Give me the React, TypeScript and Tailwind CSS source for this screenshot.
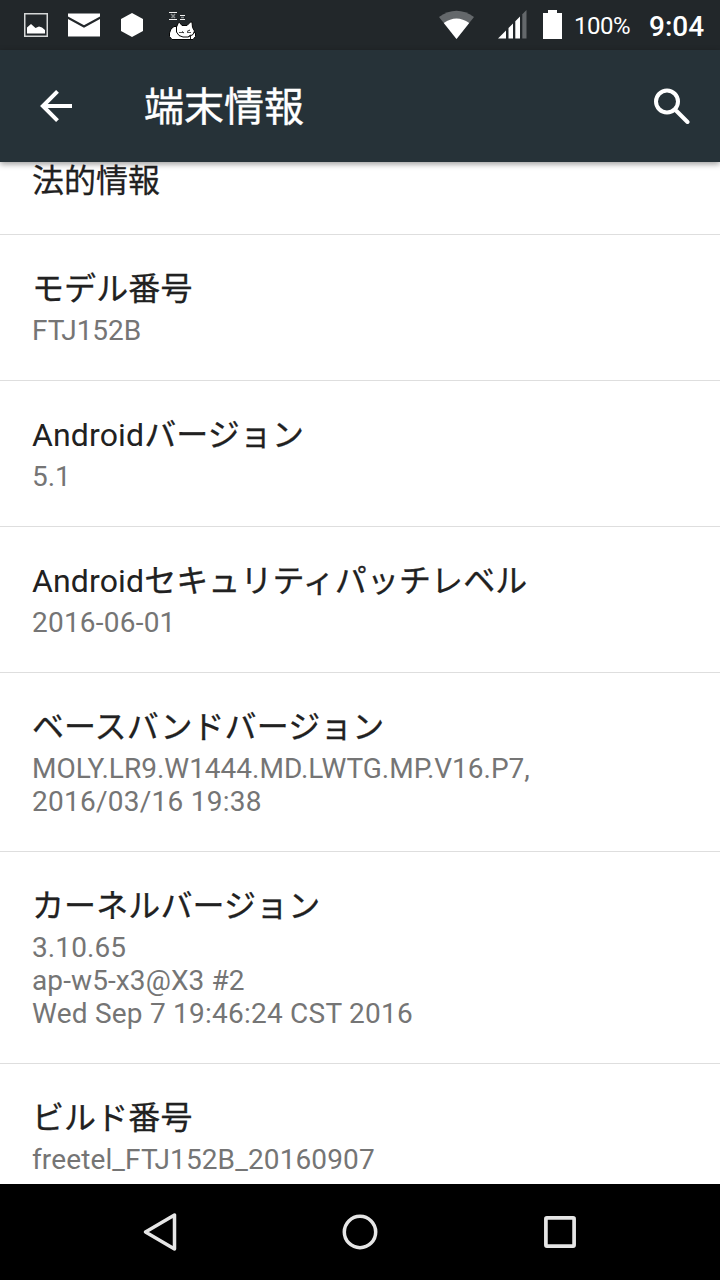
import type { ReactNode } from "react";

type Item = {
  prefix?: string;
  title: string;
  summary: string[];
  summaryClass?: string;
};

const items: Item[] = [
  { title: "モデル番号", summary: ["FTJ152B"] },
  { prefix: "Android", title: "バージョン", summary: ["5.1"] },
  {
    prefix: "Android",
    title: "セキュリティパッチレベル",
    summary: ["2016-06-01"],
    summaryClass: "tracking-[0.22px]",
  },
  {
    title: "ベースバンドバージョン",
    summary: ["MOLY.LR9.W1444.MD.LWTG.MP.V16.P7,", "2016/03/16 19:38"],
    summaryClass: "last:tracking-[0.25px]",
  },
  {
    title: "カーネルバージョン",
    summary: ["3.10.65", "ap-w5-x3@X3 #2", "Wed Sep 7 19:46:24 CST 2016"],
    summaryClass: "tracking-[0.1px] last:tracking-[0.23px]",
  },
  {
    title: "ビルド番号",
    summary: ["freetel_FTJ152B_20160907"],
    summaryClass: "tracking-[0.12px]",
  },
];

function CatIcon() {
  return (
    <svg className="ml-[25px] h-8 w-8" viewBox="0 0 32 32" fill="none">
      {/* Zz */}
      <path d="M1 3.500h8M1 10.500h8M12 6.500h5M12 10.500h5" stroke="#f0f0f0" />
      <path d="M3 5l4 4M7 5L3.500 9M13 8.500h3" stroke="#85898b" strokeWidth="1.500" />
      {/* sleeping cat: body, then head with ears */}
      <path
        d="M10 17.500H6L3 20l-1.500 4v3.500L4 30.500h21l2.500-3V24z"
        fill="#fff"
        stroke="#050505"
      />
      <path
        d="M10.500 13.500L8.500 18v5l2.500 3.500 4 1.500h5l5-2.500 1.500-3.500-2-3.500-.5-5.500h-1.500L19 16.500h-5l-2.500-3z"
        fill="#fff"
        stroke="#050505"
      />
      <path d="M11 23.500h4M19 23.500h4" stroke="#555" strokeWidth="1.200" />
      <path d="M14 22.500l2 1.500M19 22.500l3-1.500M20 28l2.500-2v4" stroke="#222" />
    </svg>
  );
}

function StatusBar() {
  return (
    <div className="flex h-[50px] shrink-0 items-center bg-[#22272a] text-white">
      <svg className="ml-6 h-6 w-6" viewBox="0 0 24 24" fill="none">
        <rect x=".75" y=".75" width="22.500" height="22.500" stroke="#d5d7d7" strokeWidth="1.500" />
        <path d="M3 20.500v-6l4-3.500 4.500 4 3.500-1.500 3 1 3 2.500v3.500z" fill="#fff" />
      </svg>
      <svg className="ml-5 h-6 w-8" viewBox="0 0 32 24" fill="none">
        <path d="M0 .5h32v23H0z" fill="#fff" />
        <path d="M-1 4.300l17 9.200L33 4.300" stroke="#22272a" strokeWidth="2.200" />
      </svg>
      <svg className="ml-[21px] h-6 w-[22px]" viewBox="0 0 22 24">
        <path d="M11 0l11 6v12l-11 6-11-6V6z" fill="#fff" />
      </svg>
      <CatIcon />

      <div className="ml-auto flex items-center">
        <svg className="h-[30px] w-[35px]" viewBox="0 0 35 30">
          <path d="M0 7Q17.500-5.500 35 7L17.500 29z" fill="#64686b" />
          <path d="M4.800 13Q17.500 4 30.200 13L17.500 29z" fill="#fff" />
        </svg>
        <svg className="ml-6 h-[30px] w-[29px]" viewBox="0 0 29 30">
          <path d="M0 28.500L8 20.500v8zM10.500 18l4.500-4.500v15h-4.500zM17.300 11.200l4.700-4.700v22h-4.700z" fill="#fff" />
          <path d="M24.300 4.200L28.500 0v28.500h-4.200z" fill="#64686b" />
        </svg>
        <svg className="ml-4 h-[30px] w-[19px]" viewBox="0 0 19 30">
          <path d="M5 0h9v3h5v26H0V3h5z" fill="#fff" />
        </svg>
        <span className="ml-3 w-[75px] pt-0.5 text-[24px] leading-[28px] tracking-[-0.5px]">100%</span>
        <span className="w-[71px] pt-[3px] text-[28px] leading-[32px] font-medium">9:04</span>
      </div>
    </div>
  );
}

function AppBar() {
  return (
    <header className="z-10 flex h-28 shrink-0 items-center bg-[#263238] text-white shadow-[0_2px_6px_rgba(0,0,0,0.4)]">
      <svg className="ml-10 h-8 w-8" viewBox="0 0 32 32" fill="none" stroke="#fff" strokeWidth="4">
        <path d="M32 16H3.500M17.500 1.400L2.900 16l14.600 14.600" />
      </svg>
      <h1 className="ml-[72px] pt-1 text-[40px] leading-[48px] [-webkit-text-stroke:0.4px_#fff]">
        端末情報
      </h1>
      <svg className="mr-[30px] ml-auto h-9 w-9" viewBox="0 0 36 36" fill="none" stroke="#fff">
        <circle cx="13" cy="13.500" r="11" strokeWidth="4" />
        <path d="M22.500 23l11 11" strokeWidth="4" strokeLinecap="round" />
      </svg>
    </header>
  );
}

function Row({ prefix, title, children }: { prefix?: string; title: string; children?: ReactNode }) {
  return (
    <li className="shrink-0 border-b border-[#dedede] px-8 pt-8 pb-[33px]">
      <div className="text-[32px] leading-[44px] text-[#212121]">
        {prefix && <span className="tracking-[0.13px]">{prefix}</span>}
        <span className="tracking-[0.1px] [-webkit-text-stroke:0.3px_#212121]">{title}</span>
      </div>
      <div className="pt-[3px]">{children}</div>
    </li>
  );
}

function NavBar() {
  return (
    <nav className="flex h-24 shrink-0 items-center justify-between bg-black px-[140px]">
      <svg className="h-10 w-10" viewBox="0 0 40 40" fill="none">
        <path d="M34.500 3v34L5.500 20z" stroke="#e6e6e6" strokeWidth="3.500" strokeLinejoin="round" />
      </svg>
      <svg className="h-10 w-10" viewBox="0 0 40 40" fill="none">
        <circle cx="20" cy="20" r="15.700" stroke="#e6e6e6" strokeWidth="3.500" />
      </svg>
      <svg className="h-10 w-10" viewBox="0 0 40 40" fill="none">
        <rect x="5.900" y="5.900" width="28.200" height="28.200" rx="1" stroke="#e6e6e6" strokeWidth="3.700" />
      </svg>
    </nav>
  );
}

export default function App() {
  return (
    <div className="flex h-[1280px] w-[720px] flex-col overflow-hidden bg-white font-[Roboto,'Noto_Sans_CJK_JP',sans-serif]">
      <StatusBar />
      <AppBar />
      <ul className="flex min-h-0 flex-1 flex-col overflow-hidden">
        {/* scrolled partly under the app bar */}
        <li className="h-[73px] shrink-0 border-b border-[#dedede] px-8 text-[32px] leading-[38px] text-[#212121] [-webkit-text-stroke:0.3px_#212121]">
          法的情報
        </li>
        {items.map((item) => (
          <Row key={item.title} prefix={item.prefix} title={item.title}>
            {item.summary.map((line) => (
              <p key={line} className={`text-[28px] leading-[33px] text-[#757575] ${item.summaryClass ?? ""}`}>
                {line}
              </p>
            ))}
          </Row>
        ))}
      </ul>
      <NavBar />
    </div>
  );
}
